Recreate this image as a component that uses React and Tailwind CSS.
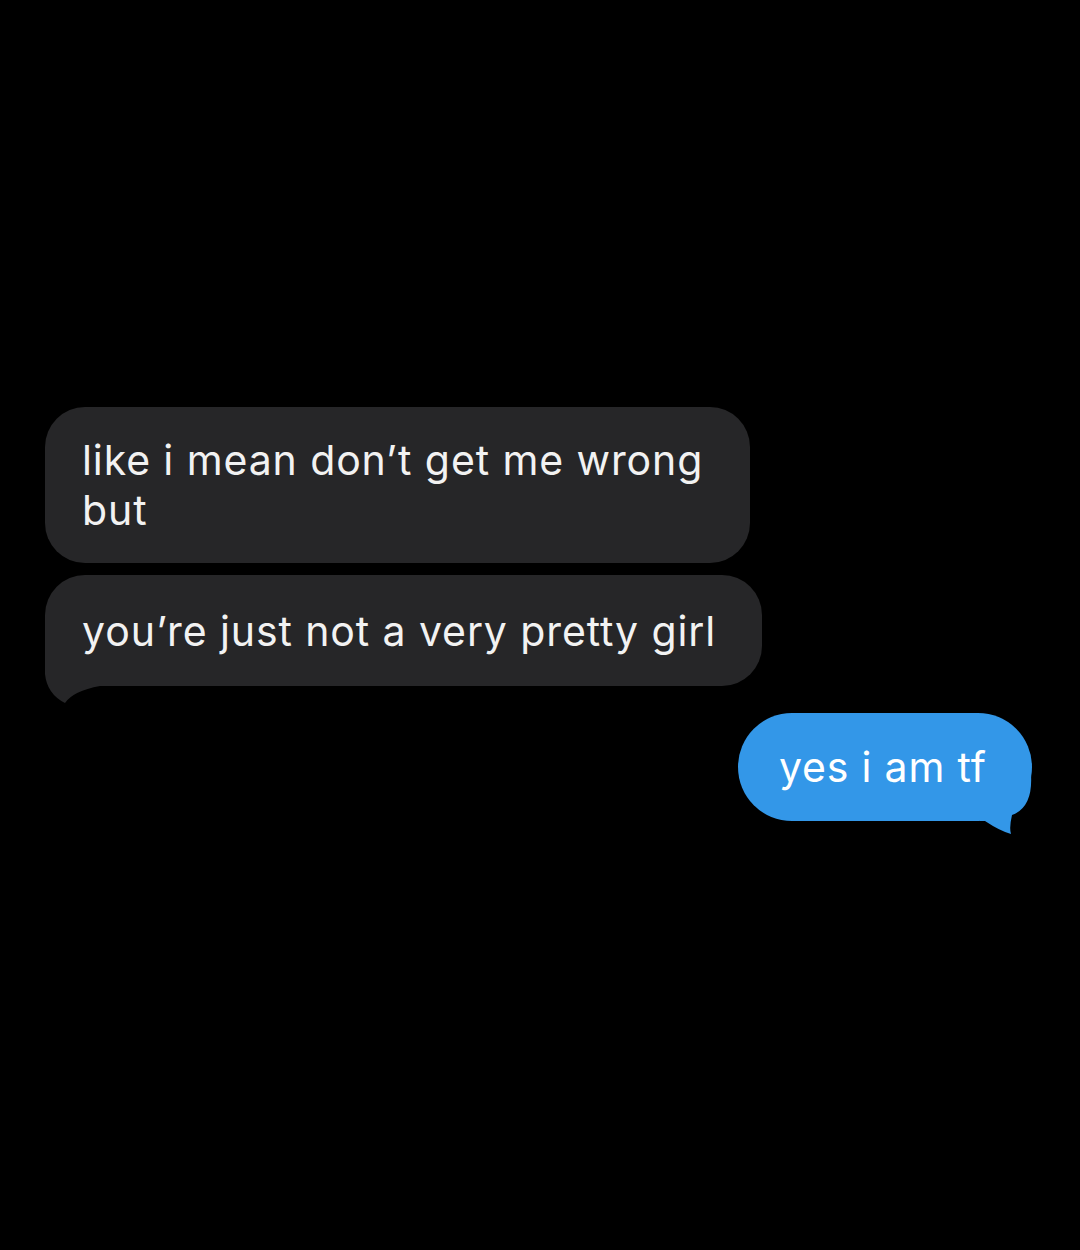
export default function App() {
  const font = { fontFamily: 'Inter, "Noto Sans", sans-serif' };
  return (
    <div className="w-[1080px] h-[1250px] bg-black overflow-hidden" style={font}>
      <div className="flex flex-col pt-[407px]">
        <div className="ml-[45px] w-[705px] h-[156px] rounded-[40px] bg-[#262628] pl-[37px] pr-[20px] flex items-center">
          <p className="text-[41px] leading-[50px] text-[#f2f2f2] tracking-[0.9px]">
            like i mean don’t get me wrong<br />but
          </p>
        </div>
        <div className="relative ml-[45px] mt-[12px] w-[717px] h-[111px] rounded-[40px] bg-[#262628] pl-[37px] flex items-center">
          <svg className="absolute left-0 top-[65px]" width="60" height="66" viewBox="0 0 60 66">
            <path d="M0 0 L0 34 Q2 54 20 63 Q28 51 55 46 L55 0 Z" fill="#262628" />
          </svg>
          <p className="relative text-[41px] leading-[50px] text-[#f2f2f2] tracking-[0.9px]">
            you’re just not a very pretty girl
          </p>
        </div>
        <div className="relative ml-[738px] mt-[27px] w-[294px] h-[108px] rounded-[54px] bg-[#3397e8] pl-[41px] flex items-center">
          <svg className="absolute left-[242px] top-[62px]" width="56" height="62" viewBox="0 0 56 62">
            <path d="M51 0 Q53 32 32 40 Q29 53 31 59 Q20 56 5 46 L0 46 L0 0 Z" fill="#3397e8" />
          </svg>
          <p className="relative text-[41px] leading-[50px] text-white tracking-[0.8px]">yes i am tf</p>
        </div>
      </div>
    </div>
  );
}
